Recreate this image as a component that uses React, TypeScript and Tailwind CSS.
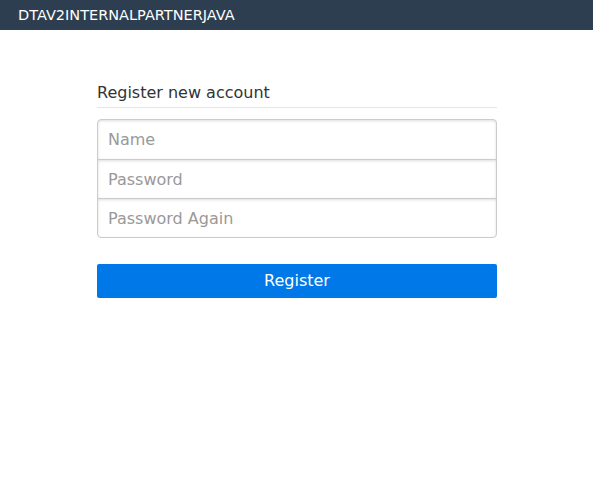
import React from "react";

export default function App() {
  const font = { fontFamily: '"DejaVu Sans", sans-serif' };
  return (
    <div className="min-h-[494px] bg-white" style={font}>
      <div className="h-[30px] bg-[#2d3e50] flex items-center px-[18px]">
        <span className="text-white text-[14.5px] leading-none">DTAV2INTERNALPARTNERJAVA</span>
      </div>
      <div className="w-[400px] ml-[97px] mt-[53px]">
        <div className="text-[16px] text-[#333] leading-[20px] pb-[4px] border-b border-[#e5e5e5]">Register new account</div>
        <div className="mt-[11px] flex flex-col">
          <input
            placeholder="Name"
            className="h-[41px] px-[10px] text-[16px] border border-[#ccc] rounded-t-[4px] shadow-[inset_0_1px_3px_#ddd] placeholder:text-[#999] outline-none"
          />
          <input
            placeholder="Password"
            type="password"
            className="h-[40px] -mt-px px-[10px] text-[16px] border border-[#ccc] shadow-[inset_0_1px_3px_#ddd] placeholder:text-[#999] outline-none"
          />
          <input
            placeholder="Password Again"
            type="password"
            className="h-[40px] -mt-px px-[10px] text-[16px] border border-[#ccc] rounded-b-[4px] shadow-[inset_0_1px_3px_#ddd] placeholder:text-[#999] outline-none"
          />
        </div>
        <button className="mt-[26px] w-full h-[34px] bg-[#0078e7] text-white text-[16px] rounded-[2px]">Register</button>
      </div>
    </div>
  );
}
